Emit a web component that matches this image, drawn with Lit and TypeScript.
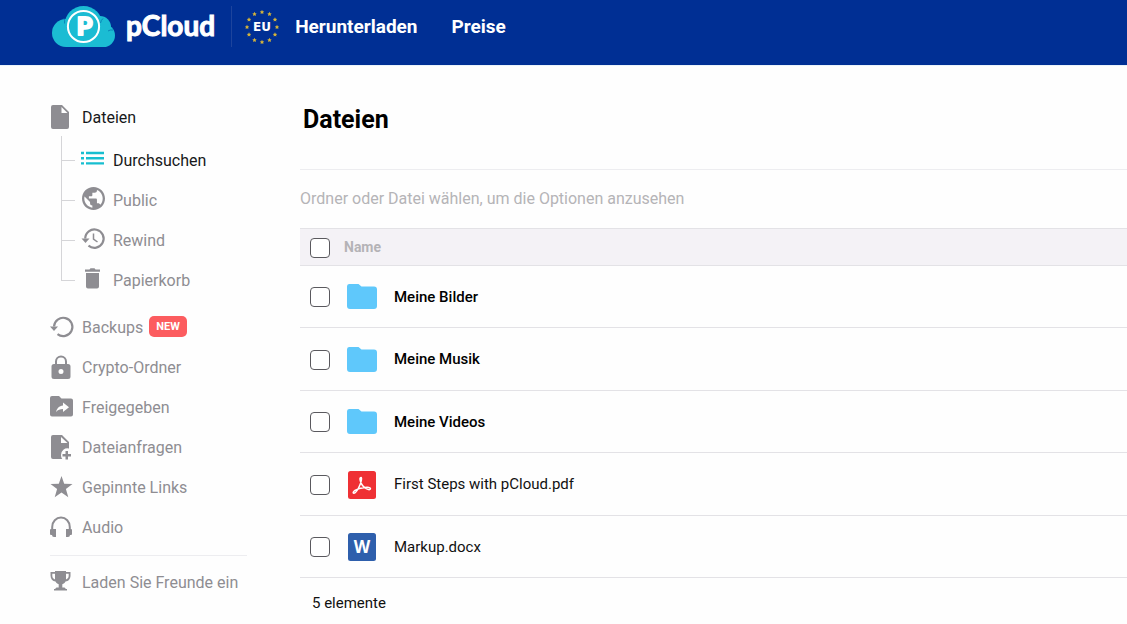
import { LitElement, html, css, svg, nothing } from "lit";
import { customElement } from "lit/decorators.js";

interface NavItem {
  label: string;
  icon: keyof typeof icons;
  active?: boolean;
  badge?: string;
}

interface FileEntry {
  name: string;
  kind: "folder" | "pdf" | "word";
}

const icons = {
  file: svg`<path fill-rule="evenodd" d="M3 0h11l7 7v15a2 2 0 0 1-2 2H5a2 2 0 0 1-2-2V2a2 2 0 0 1 2-2zM13.500 2v6h6z"/>`,
  list: svg`<path d="M0 3.800h3v2.400H0zM5 3.800h18v2.400H5zM0 9h3v2.400H0zM5 9h18v2.400H5zM0 14.200h3v2.400H0zM5 14.200h18v2.400H5z"/>`,
  globe: svg`<path transform="translate(-1.300 -3.200) scale(1.150)" d="M12 2C6.480 2 2 6.480 2 12s4.480 10 10 10 10-4.480 10-10S17.520 2 12 2zm-1 17.930c-3.950-.490-7-3.850-7-7.930 0-.620.080-1.210.210-1.790L9 15v1c0 1.100.900 2 2 2v1.930zm6.900-2.540c-.260-.810-1-1.390-1.900-1.390h-1v-3c0-.550-.450-1-1-1H8v-2h2c.550 0 1-.450 1-1V7h2c1.100 0 2-.900 2-2v-.410c2.930 1.190 5 4.060 5 7.410 0 2.080-.800 3.970-2.100 5.390z"/>`,
  rewind: svg`<path fill="none" stroke="currentColor" stroke-width="2.200" d="M4.200 10.500A9.200 9.200 0 1 1 7.500 17.700"/><path d="M.500 10.500h8l-4 4.600z"/><path fill="none" stroke="currentColor" stroke-width="1.500" d="M12.500 5.500v5.500l4 3"/>`,
  trash: svg`<path d="M5 5h13v13.500a2 2 0 0 1-2 2H7a2 2 0 0 1-2-2zM4 1.500h4.500l1-1.200h4l1 1.200H19v2.200H4z"/>`,
  restore: svg`<path fill="none" stroke="currentColor" stroke-width="2.200" d="M4 11.500A9.200 9.200 0 1 1 7.500 19.200"/><path d="M0 11.500h8l-4 4.600z"/>`,
  lock: svg`<path fill-rule="evenodd" d="M4 9h1V6.500a6 6 0 0 1 12 0V9h1a2.500 2.500 0 0 1 2.500 2.500v10A2.500 2.500 0 0 1 18 24H4a2.500 2.500 0 0 1-2.500-2.500v-10A2.500 2.500 0 0 1 4 9zM7 9h8V6.500a4 4 0 0 0-8 0zM11 14a2.500 2.500 0 1 0 0 5 2.500 2.500 0 0 0 0-5z"/>`,
  shared: svg`<path fill-rule="evenodd" d="M2 1h7l2.500 2.500H21A2 2 0 0 1 23 5.500v14a2 2 0 0 1-2 2H2a2 2 0 0 1-2-2V3a2 2 0 0 1 2-2zM13 7.500v3c-4 .400-6 3-7 6.500 2-2.200 4-3 7-3v3l6-4.800z"/>`,
  request: svg`<path fill-rule="evenodd" d="M3 0h9l7 7v6.500a6.500 6.500 0 0 0-8 6.500c0 1.500.500 3 1.300 4H3a2 2 0 0 1-2-2V2a2 2 0 0 1 2-2zM11 2v6h6.500z"/><path d="M15.500 16h2.500v3h3v2.500h-3v3h-2.500v-3h-3V19h3z"/>`,
  star: svg`<path d="M11.500 1l2.700 7.800 8.300.200-6.600 5 2.400 8.200-6.800-4.700-6.800 4.700 2.400-8.200-6.600-5 8.300-.200z"/>`,
  audio: svg`<path fill="none" stroke="currentColor" stroke-width="2" d="M2.200 15v-3a8.800 9.500 0 0 1 17.600 0v3"/><path d="M0 15a1 1 0 0 1 1-1h5v8H4a2 2 0 0 1-2-2H1a1 1 0 0 1-1-1zM22 15a1 1 0 0 0-1-1h-5v8h2a2 2 0 0 0 2-2h1a1 1 0 0 0 1-1z"/>`,
  trophy: svg`<path fill-rule="evenodd" d="M5 1h11v1h4.500v3.500c0 3.500-2 5.700-5 6-.700 1.500-1.800 2.300-3.200 2.700v3.300h2.200l1.500 1.500h1v1.500H4v-1.500h1l1.500-1.500h2.200v-3.300C7.300 13.800 6.200 13 5.500 11.500c-3-.300-5-2.500-5-6V2H5zM5 3.800H2.300v1.700c0 2 .900 3.400 2.700 3.900zM16 3.800v5.600c1.800-.500 2.700-1.900 2.700-3.900V3.800z"/>`,
};

const fileIcons = {
  folder: svg`<path fill="#5fc8fb" d="M3 3h9.500l3 2.500H28a3 3 0 0 1 3 3V25a3 3 0 0 1-3 3H4a3 3 0 0 1-3-3V5.500A2.500 2.500 0 0 1 3 3z"/>`,
  pdf: svg`<rect x="2" y="2" width="28" height="28" rx="2.500" fill="#ef3034"/>
    <path fill="none" stroke="#fff" stroke-width="1.500" stroke-linejoin="round" stroke-linecap="round" d="M15 8.500c-1.200 0-1.200 1.500-.700 3.200.900 3.300 3.200 6.400 5.900 8 2.200 1.200 4.300 1.300 4.300-.100 0-1.300-2.600-1.500-5.600-1.200-3.700.300-7.500 1.400-9.900 2.900-2 1.300-2.300 3.100-1 2.900 1.900-.300 4.300-4.400 5.900-8.200 1.100-2.600 2.300-7.500 1.100-7.500z"/>`,
  word: svg`<rect x="2" y="2" width="28" height="28" rx="2.500" fill="#2e5fac"/>
    <text class="word-letter" x="16" y="22" text-anchor="middle">W</text>`,
};

const browse: NavItem[] = [
  { label: "Durchsuchen", icon: "list", active: true },
  { label: "Public", icon: "globe" },
  { label: "Rewind", icon: "rewind" },
  { label: "Papierkorb", icon: "trash" },
];

const sections: NavItem[] = [
  { label: "Backups", icon: "restore", badge: "NEW" },
  { label: "Crypto-Ordner", icon: "lock" },
  { label: "Freigegeben", icon: "shared" },
  { label: "Dateianfragen", icon: "request" },
  { label: "Gepinnte Links", icon: "star" },
  { label: "Audio", icon: "audio" },
];

const files: FileEntry[] = [
  { name: "Meine Bilder", kind: "folder" },
  { name: "Meine Musik", kind: "folder" },
  { name: "Meine Videos", kind: "folder" },
  { name: "First Steps with pCloud.pdf", kind: "pdf" },
  { name: "Markup.docx", kind: "word" },
];

const starAngles = Array.from({ length: 12 }, (_, i) => (i * Math.PI) / 6);

@customElement("app-header")
class AppHeader extends LitElement {
  static styles = css`
    :host {
      display: block;
      font-family: Roboto, sans-serif;
    }
    .bar {
      display: flex;
      align-items: center;
      height: 53px;
      padding: 0 52px 12px;
      background: #002f94;
      border-bottom: 1px solid #e9f3fb;
      color: #fff;
    }
    a {
      color: inherit;
      text-decoration: none;
    }
    .logo {
      display: flex;
      align-items: center;
      gap: 11px;
      padding-right: 16px;
      border-right: 1px solid #1d449d;
    }
    .cloud {
      display: block;
      width: 63px;
      height: 41px;
    }
    .letter {
      font: 900 25px Lato, sans-serif;
      fill: #fff;
      stroke: #fff;
      stroke-width: 2px;
      stroke-linejoin: round;
    }
    .wordmark {
      font: 700 28px/34px Lato, sans-serif;
      -webkit-text-stroke: 1px #fff;
      padding-bottom: 3px;
    }
    .eu {
      display: block;
      width: 34px;
      height: 34px;
      margin: 0 16px 0 13px;
    }
    .eu-label {
      font: 700 12px "DejaVu Sans", sans-serif;
      fill: #fff;
    }
    .links {
      display: flex;
      gap: 34px;
      font-size: 19px;
      line-height: 24px;
      font-weight: 700;
    }
  `;

  render() {
    return html`
      <header class="bar">
        <a class="logo" href="#" aria-label="pCloud">
          <svg class="cloud" viewBox="0 0 63 41" aria-hidden="true">
            <g fill="#1bbcd3">
              <circle cx="14" cy="27" r="14" />
              <circle cx="31.500" cy="19" r="19" />
              <circle cx="48" cy="21" r="11" />
              <circle cx="51.500" cy="29.500" r="11.500" />
              <rect x="14" y="25" width="38" height="16" />
            </g>
            <path d="M12 12.500q1 2 .500 5M51 12.500q-2 1.500-2.500 4.500M61 24q-3-.500-5 1" fill="none" stroke="#0a86b8" stroke-width="1" />
            <circle cx="31.500" cy="20.500" r="15.600" fill="none" stroke="#fff" stroke-width="2" />
            <text class="letter" x="32.500" y="29" text-anchor="middle">P</text>
          </svg>
          <span class="wordmark">pCloud</span>
        </a>
        <svg class="eu" viewBox="0 0 34 34" role="img" aria-label="EU">
          ${starAngles.map(
            (a) => svg`<path fill="#d6b53a" transform="translate(${17 + 15 * Math.sin(a)} ${17 - 15 * Math.cos(a)})"
              d="M0-2.200L.700-.700 2.200-.600 1.100.500 1.400 2 0 1.300-1.400 2-1.100.500-2.200-.600-.700-.700z"/>`
          )}
          <text class="eu-label" x="17" y="21" text-anchor="middle">EU</text>
        </svg>
        <nav class="links">
          <a href="#">Herunterladen</a>
          <a href="#">Preise</a>
        </nav>
      </header>
    `;
  }
}

@customElement("side-nav")
class SideNav extends LitElement {
  static styles = css`
    :host {
      display: block;
      font: 16px/20px Roboto, sans-serif;
      color: #8e8d92;
    }
    ul {
      list-style: none;
      margin: 0;
      padding: 0;
    }
    .item {
      display: flex;
      align-items: center;
      height: 40px;
      gap: 8px;
      color: inherit;
      text-decoration: none;
    }
    .label {
      padding-top: 2px;
      white-space: nowrap;
    }
    .icon {
      flex: none;
      display: block;
      width: 24px;
      height: 24px;
      fill: currentColor;
      overflow: visible;
    }
    .active {
      color: #17181a;
    }
    .root .icon {
      margin-left: -2px;
      margin-right: 2px;
      color: #8e8d92;
    }
    .tree {
      padding: 3px 0 7px 11px;
    }
    .node {
      display: flex;
      gap: 6px;
    }
    .branch {
      width: 14px;
    }
    .branch::before,
    .branch::after {
      content: "";
      display: block;
      box-sizing: border-box;
      border-left: 1px solid #d5d5d8;
    }
    .branch::before {
      height: 21px;
      border-bottom: 1px solid #d5d5d8;
    }
    .branch::after {
      height: 19px;
    }
    .node:first-child .branch::before {
      height: 25px;
      margin-top: -4px;
    }
    .node:last-child .branch::after {
      display: none;
    }
    .tree .active .icon {
      color: #17bed0;
    }
    .badge {
      padding: 0 7px;
      border-radius: 5px;
      background: #fc5c5f;
      color: #fff;
      font-size: 11px;
      font-weight: 700;
      line-height: 21px;
      margin: 0 0 2px -2px;
    }
    .invite {
      margin-top: 8px;
      padding-top: 6px;
      border-top: 1px solid #ededf0;
    }
  `;

  private item(i: NavItem, extra = "") {
    return html`<a class="item ${i.active ? "active" : ""} ${extra}" href="#">
      <svg class="icon" viewBox="0 0 24 24" aria-hidden="true">${icons[i.icon]}</svg>
      <span class="label">${i.label}</span>
      ${i.badge ? html`<span class="badge">${i.badge}</span>` : nothing}
    </a>`;
  }

  render() {
    return html`
      <nav>
        ${this.item({ label: "Dateien", icon: "file", active: true }, "root")}
        <ul class="tree">
          ${browse.map((i) => html`<li class="node"><span class="branch"></span>${this.item(i)}</li>`)}
        </ul>
        <ul>
          ${sections.map((i) => html`<li>${this.item(i)}</li>`)}
        </ul>
        <div class="invite">${this.item({ label: "Laden Sie Freunde ein", icon: "trophy" })}</div>
      </nav>
    `;
  }
}

@customElement("file-table")
class FileTable extends LitElement {
  static styles = css`
    :host {
      display: block;
      font: 15px/20px Roboto, sans-serif;
      color: #111;
    }
    table {
      width: 100%;
      border-collapse: separate;
      border-spacing: 0;
    }
    th,
    td {
      box-sizing: border-box;
      padding: 0;
      text-align: left;
      vertical-align: middle;
      border-bottom: 1px solid #e3e2e6;
    }
    th {
      height: 38px;
      background: #f4f2f6;
      border-top: 1px solid #e3e2e6;
      color: #b4b3b6;
      font-size: 14px;
      font-weight: 700;
    }
    td {
      height: 62px;
    }
    tbody tr:nth-child(even) td {
      height: 63px;
    }
    .check {
      width: 44px;
      padding-left: 10px;
      box-sizing: border-box;
    }
    .kind {
      width: 50px;
      padding-left: 2px;
      box-sizing: border-box;
    }
    input {
      appearance: none;
      display: block;
      box-sizing: border-box;
      width: 20px;
      height: 20px;
      margin: 1px 0 0;
      border: 1px solid #5a595e;
      border-radius: 4px;
      background: #fff;
    }
    input:checked {
      background: #17bed0;
    }
    .file-icon {
      display: block;
      width: 32px;
      height: 32px;
      margin-top: 1px;
    }
    .word-letter {
      font: 700 17px "Open Sans", sans-serif;
      fill: #fff;
    }
    .folder {
      font-weight: 500;
      color: #000;
    }
    .count {
      margin: 0;
      padding: 15px 12px;
    }
  `;

  render() {
    return html`
      <table>
        <thead>
          <tr>
            <th class="check"><input type="checkbox" aria-label="Alle" /></th>
            <th colspan="2">Name</th>
          </tr>
        </thead>
        <tbody>
          ${files.map(
            (f, n) => html`<tr>
              <td class="check"><input type="checkbox" id="file-${n}" /></td>
              <td class="kind">
                <svg class="file-icon" viewBox="0 0 32 32" aria-hidden="true">${fileIcons[f.kind]}</svg>
              </td>
              <td class=${f.kind === "folder" ? "folder" : ""}><label for="file-${n}">${f.name}</label></td>
            </tr>`
          )}
        </tbody>
      </table>
      <p class="count">${files.length} elemente</p>
    `;
  }
}

@customElement("app-root")
class AppRoot extends LitElement {
  static styles = css`
    :host {
      display: block;
      min-height: 100vh;
      background: #fefefe;
      font-family: Roboto, sans-serif;
    }
    .page {
      display: grid;
      grid-template-columns: 197px minmax(0, 1fr);
      column-gap: 53px;
      padding-left: 50px;
    }
    .side {
      padding-top: 31px;
    }
    h1 {
      margin: 0;
      padding: 39px 3px 35px;
      font-size: 25px;
      line-height: 29px;
      font-weight: 700;
      color: #000;
      border-bottom: 1px solid #ededf0;
    }
    .hint {
      margin: 0;
      padding: 19px 0;
      font-size: 16px;
      line-height: 20px;
      color: #b5b4b7;
    }
  `;

  render() {
    return html`
      <app-header></app-header>
      <div class="page">
        <side-nav class="side"></side-nav>
        <main>
          <h1>Dateien</h1>
          <p class="hint">Ordner oder Datei wählen, um die Optionen anzusehen</p>
          <file-table></file-table>
        </main>
      </div>
    `;
  }
}
